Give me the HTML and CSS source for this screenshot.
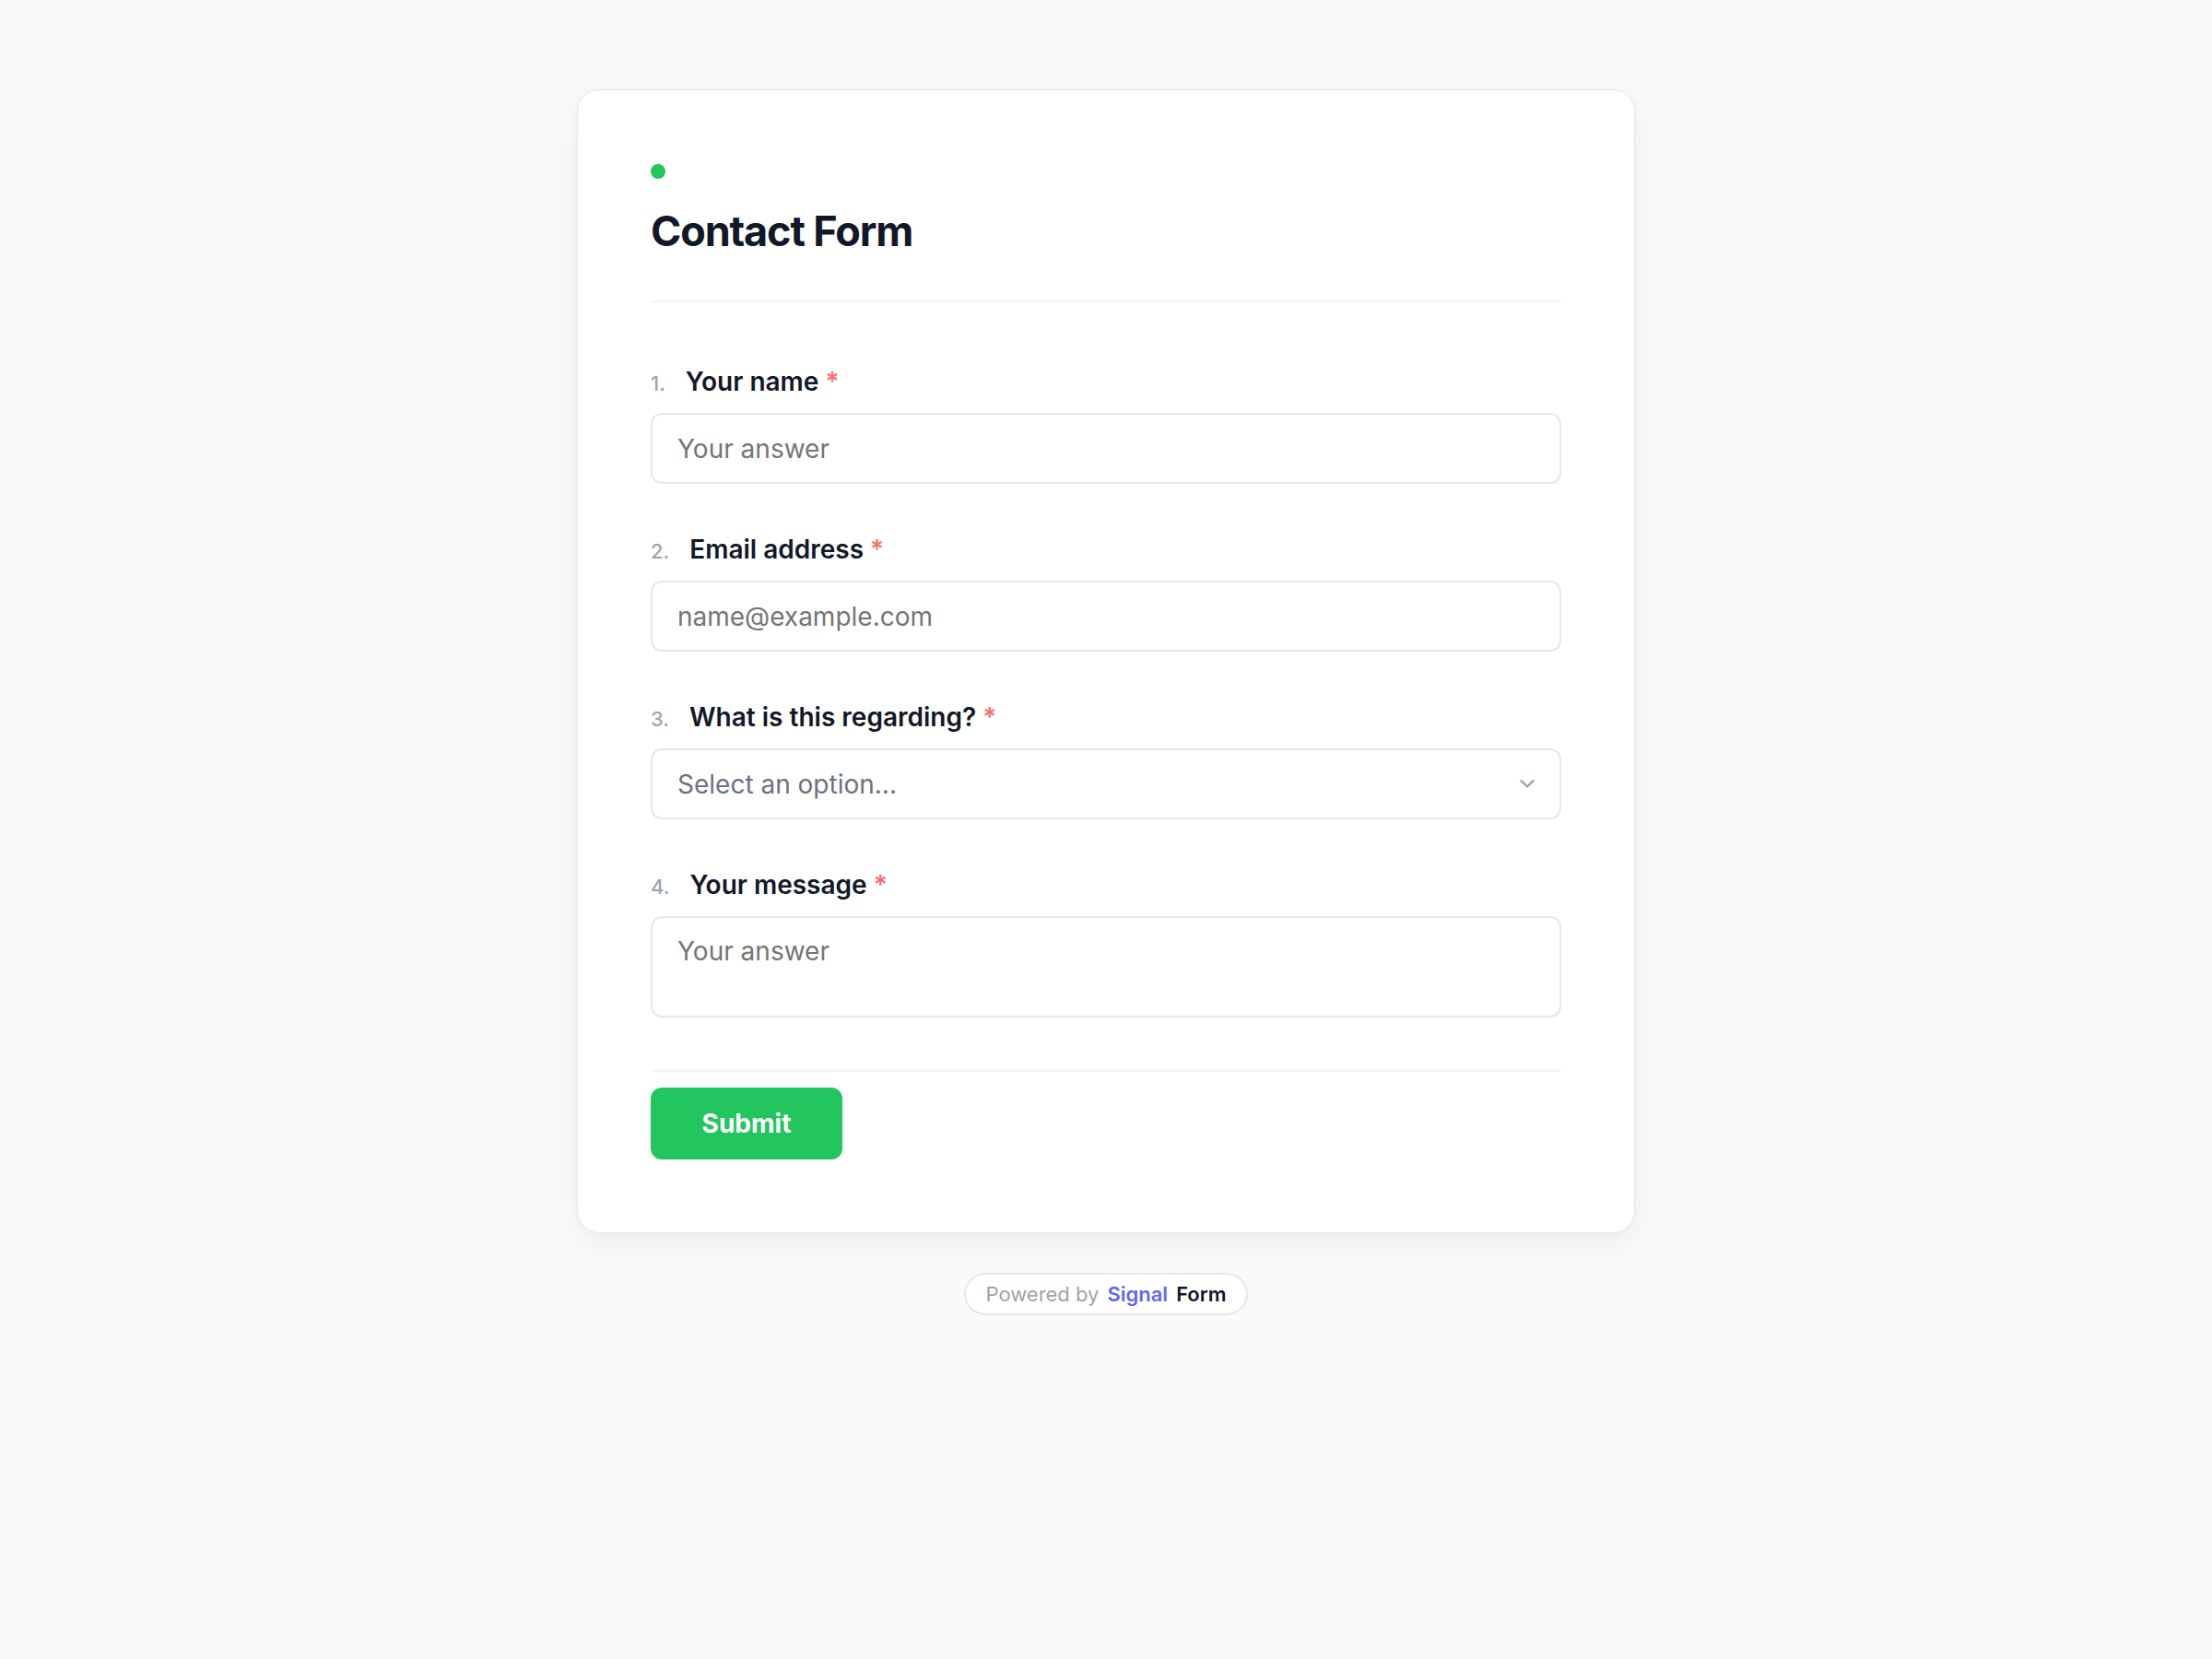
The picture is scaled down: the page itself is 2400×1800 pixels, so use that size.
FILE: index.html
```html
<!DOCTYPE html>
<html lang="en">
<head>
<meta charset="utf-8">
<title>Contact Form</title>
<link rel="stylesheet" href="styles.css">
</head>
<body>
<main class="page">
  <form class="card">
    <header class="card-header">
      <span class="dot"></span>
      <h1 class="title">Contact Form</h1>
    </header>

    <div class="fields">
      <div class="field">
        <label class="label" for="name"><span class="num">1.</span><span class="text">Your name</span><span class="req">*</span></label>
        <input class="control" id="name" type="text" placeholder="Your answer">
      </div>
      <div class="field">
        <label class="label" for="email"><span class="num">2.</span><span class="text">Email address</span><span class="req">*</span></label>
        <input class="control" id="email" type="email" placeholder="name@example.com">
      </div>
      <div class="field">
        <label class="label" for="topic"><span class="num">3.</span><span class="text">What is this regarding?</span><span class="req">*</span></label>
        <div class="select-wrap">
          <select class="control select" id="topic">
            <option>Select an option...</option>
          </select>
          <svg class="chevron" width="16" height="9" viewBox="0 0 16 9" fill="none"><path d="M1.5 1.2 8 7.5l6.5-6.3" stroke="#9ca3af" stroke-width="2.4" stroke-linecap="round" stroke-linejoin="round"/></svg>
        </div>
      </div>
      <div class="field">
        <label class="label" for="msg"><span class="num">4.</span><span class="text">Your message</span><span class="req">*</span></label>
        <textarea class="control area" id="msg" placeholder="Your answer"></textarea>
      </div>
    </div>

    <div class="actions">
      <button class="submit" type="button">Submit</button>
    </div>
  </form>

  <div class="powered">
    <span class="pw">Powered by</span>
    <span class="brand"><span class="signal">Signal</span><span class="form">Form</span></span>
  </div>
</main>
</body>
</html>
```

FILE: styles.css
```css
* { box-sizing: border-box; }

html, body {
  margin: 0;
  padding: 0;
  background: #f9fafb;
  font-family: Inter, "Noto Sans", "Liberation Sans", sans-serif;
  color: #111827;
}

.page {
  display: flex;
  flex-direction: column;
  align-items: center;
  padding-top: 97px;
  min-height: 1800px;
}

.card {
  width: 1148px;
  background: #ffffff;
  border: 1px solid #e5e7eb;
  border-radius: 24px;
  padding: 80px 79px 79px;
  box-shadow: 0 12px 40px rgba(17, 24, 39, 0.05), 0 2px 6px rgba(17, 24, 39, 0.03);
}

.card-header {
  display: flex;
  flex-direction: column;
  align-items: flex-start;
  padding-bottom: 48px;
  border-bottom: 2px solid #f3f4f6;
}

.dot {
  width: 16px;
  height: 16px;
  border-radius: 50%;
  background: #22c55e;
  margin-bottom: 30px;
}

.title {
  margin: 0;
  font-size: 45px;
  line-height: 54px;
  font-weight: 700;
  letter-spacing: -0.025em;
  color: #111827;
}

.fields {
  display: flex;
  flex-direction: column;
  gap: 51px;
  margin-top: 66px;
}

.field {
  display: flex;
  flex-direction: column;
}

.label {
  display: flex;
  align-items: baseline;
  height: 40px;
  line-height: 40px;
  margin-bottom: 14px;
}

.num {
  font-size: 22px;
  font-weight: 500;
  color: #9ca3af;
  margin-right: 22px;
}

.text {
  font-size: 28px;
  font-weight: 600;
  color: #111827;
}

.req {
  font-size: 28px;
  font-weight: 600;
  color: #f87171;
  margin-left: 7px;
}

.control {
  width: 100%;
  height: 77px;
  border: 2px solid #e5e7eb;
  border-radius: 12px;
  background: #ffffff;
  padding: 0 27px;
  font-family: inherit;
  font-size: 28px;
  color: #111827;
  outline: none;
}

.control::placeholder {
  color: #757575;
}

.select-wrap {
  position: relative;
}

.select {
  appearance: none;
  -webkit-appearance: none;
  color: #6b7280;
}

.chevron {
  position: absolute;
  right: 29px;
  top: 34px;
  pointer-events: none;
}

.area {
  height: 110px;
  padding: 16px 27px;
  line-height: 40.5px;
  resize: none;
  display: block;
}

.actions {
  margin-top: 57px;
  border-top: 2px solid #f3f4f6;
  padding-top: 17px;
}

.submit {
  width: 208px;
  height: 78px;
  border: none;
  border-radius: 12px;
  background: #22c55e;
  color: #ffffff;
  font-family: inherit;
  font-size: 28px;
  font-weight: 700;
  cursor: pointer;
}

.powered {
  margin-top: 43px;
  height: 46px;
  padding: 0 21px;
  display: flex;
  align-items: center;
  gap: 9px;
  background: #ffffff;
  border: 2px solid #e5e7eb;
  border-radius: 999px;
  font-size: 22px;
}

.pw {
  color: #9ca3af;
}

.brand {
  display: flex;
  gap: 9px;
  font-weight: 600;
}

.signal {
  color: #6366f1;
}

.form {
  color: #111827;
}
```
